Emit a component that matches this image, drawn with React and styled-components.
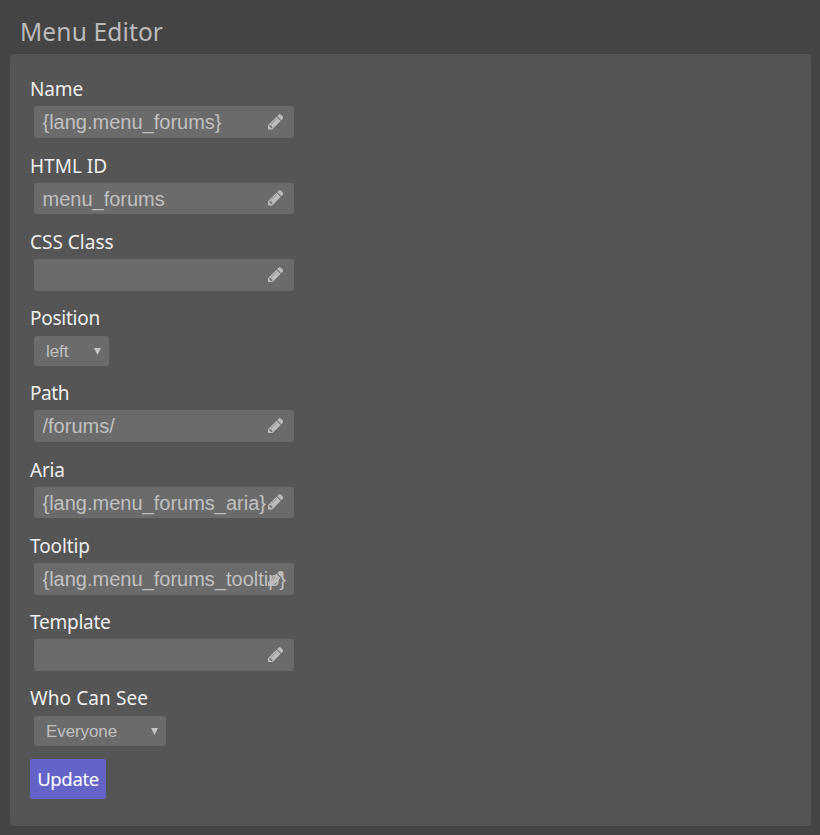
import React from "react";
import styled, { createGlobalStyle } from "styled-components";

const GlobalStyle = createGlobalStyle`
  * { box-sizing: border-box; }
  body {
    margin: 0;
    background: #444444;
    font-family: "Noto Sans", sans-serif;
    color: #eeeeee;
  }
`;

const Page = styled.main`
  display: flex;
  flex-direction: column;
  width: 820px;
  height: 835px;
  padding: 0 9px 9px 10px;
`;

const Title = styled.h1`
  height: 54px;
  margin: 0;
  padding: 12px 0 0 10px;
  color: #bbbbbb;
  font-size: 24.5px;
  font-weight: 400;
  line-height: 40px;
  letter-spacing: 0.15px;
`;

const Panel = styled.form`
  flex: 1;
  padding: 7.75px 20px 0;
  border-radius: 4px;
  background: #555555;
`;

const Field = styled.div`
  display: flex;
  flex-direction: column;
  align-items: flex-start;
`;

const Label = styled.label`
  height: ${(p) => p.$height}px;
  padding-top: ${(p) => p.$height - 29.1}px;
  font-size: 19px;
  line-height: 24px;
  letter-spacing: ${(p) => p.$tracking || 0}px;
  white-space: nowrap;
`;

const SelectLabel = styled(Label)`
  padding-top: 15.4px;
`;

const Control = styled.div`
  position: relative;
  width: ${(p) => p.$width}px;
  height: ${(p) => p.$height}px;
  margin-left: 4px;
  border-radius: 3px;
  background: #6b6b6b;
`;

const TextInput = styled.input`
  display: block;
  width: 100%;
  height: 100%;
  padding: 1.2px 4px 0 8.5px;
  border: 0;
  outline: 0;
  background: transparent;
  color: #c0c0c0;
  font: 20px "Liberation Sans", Arial, sans-serif;
`;

const Select = styled.select`
  display: block;
  width: 100%;
  height: 100%;
  padding: 1px 0 0 12px;
  appearance: none;
  border: 0;
  outline: 0;
  background: transparent;
  color: #c0c0c0;
  font: 17px "Liberation Sans", Arial, sans-serif;
  letter-spacing: -0.1px;
`;

const PencilIcon = styled.svg`
  position: absolute;
  right: 10.6px;
  top: 7.7px;
  width: 15.4px;
  height: 15.4px;
  fill: #bbbbbb;
  pointer-events: none;
`;

const ArrowIcon = styled.svg`
  position: absolute;
  right: 8px;
  top: 12px;
  width: 7px;
  height: 7px;
  fill: #c4c4c4;
  pointer-events: none;
`;

const UpdateButton = styled.button`
  display: block;
  width: 76px;
  height: 40px;
  margin-top: 13px;
  padding: 0;
  border: 0;
  border-radius: 3px;
  background: #6464c8;
  color: #ffffff;
  font: 18.6px/40px "Noto Sans", sans-serif;
  letter-spacing: -0.4px;
`;

const fields = [
  { id: "name", label: "Name", value: "{lang.menu_forums}", tracking: -0.15 },
  { id: "html-id", label: "HTML ID", value: "menu_forums" },
  { id: "css-class", label: "CSS Class", value: "" },
  { id: "position", label: "Position", options: ["left", "right"], width: 75, tracking: -0.25 },
  { id: "path", label: "Path", value: "/forums/", tracking: -0.4 },
  { id: "aria", label: "Aria", value: "{lang.menu_forums_aria}", tracking: -0.2 },
  { id: "tooltip", label: "Tooltip", value: "{lang.menu_forums_tooltip}", tracking: -0.1 },
  { id: "template", label: "Template", value: "", tracking: -0.25 },
  { id: "visibility", label: "Who Can See", options: ["Everyone"], width: 132, tracking: 0.1 },
];

function Pencil() {
  return (
    <PencilIcon viewBox="128 149 1515 1515" aria-hidden="true">
      <path d="M491 1536l91-91-235-235-91 91v107h128v128h107zM1014 608q0-22-22-22-10 0-17 7l-542 542q-7 7-7 17 0 22 22 22 10 0 17-7l542-542q7-7 7-17zM960 416l416 416-832 832h-416v-416zM1643 512q0 53-37 90l-166 166-416-416 166-165q36-38 90-38 53 0 91 38l235 234q37 39 37 91z" />
    </PencilIcon>
  );
}

function TextField({ id, label, value, tracking }) {
  return (
    <Field>
      <Label htmlFor={id} $tracking={tracking} $height={44.7}>{label}</Label>
      <Control $width={260} $height={31.6}>
        <TextInput id={id} defaultValue={value} spellCheck={false} />
        <Pencil />
      </Control>
    </Field>
  );
}

function SelectField({ id, label, options, width, tracking }) {
  return (
    <Field>
      <SelectLabel htmlFor={id} $tracking={tracking} $height={45}>{label}</SelectLabel>
      <Control $width={width} $height={30.1}>
        <Select id={id}>
          {options.map((o) => <option key={o}>{o}</option>)}
        </Select>
        <ArrowIcon viewBox="0 0 7 7" aria-hidden="true">
          <path d="M0 0h7L3.5 7z" />
        </ArrowIcon>
      </Control>
    </Field>
  );
}

export default function App() {
  return (
    <>
      <GlobalStyle />
      <Page>
        <Title>Menu Editor</Title>
        <Panel>
          {fields.map((f) =>
            f.options ? <SelectField key={f.id} {...f} /> : <TextField key={f.id} {...f} />
          )}
          <UpdateButton type="button">Update</UpdateButton>
        </Panel>
      </Page>
    </>
  );
}
